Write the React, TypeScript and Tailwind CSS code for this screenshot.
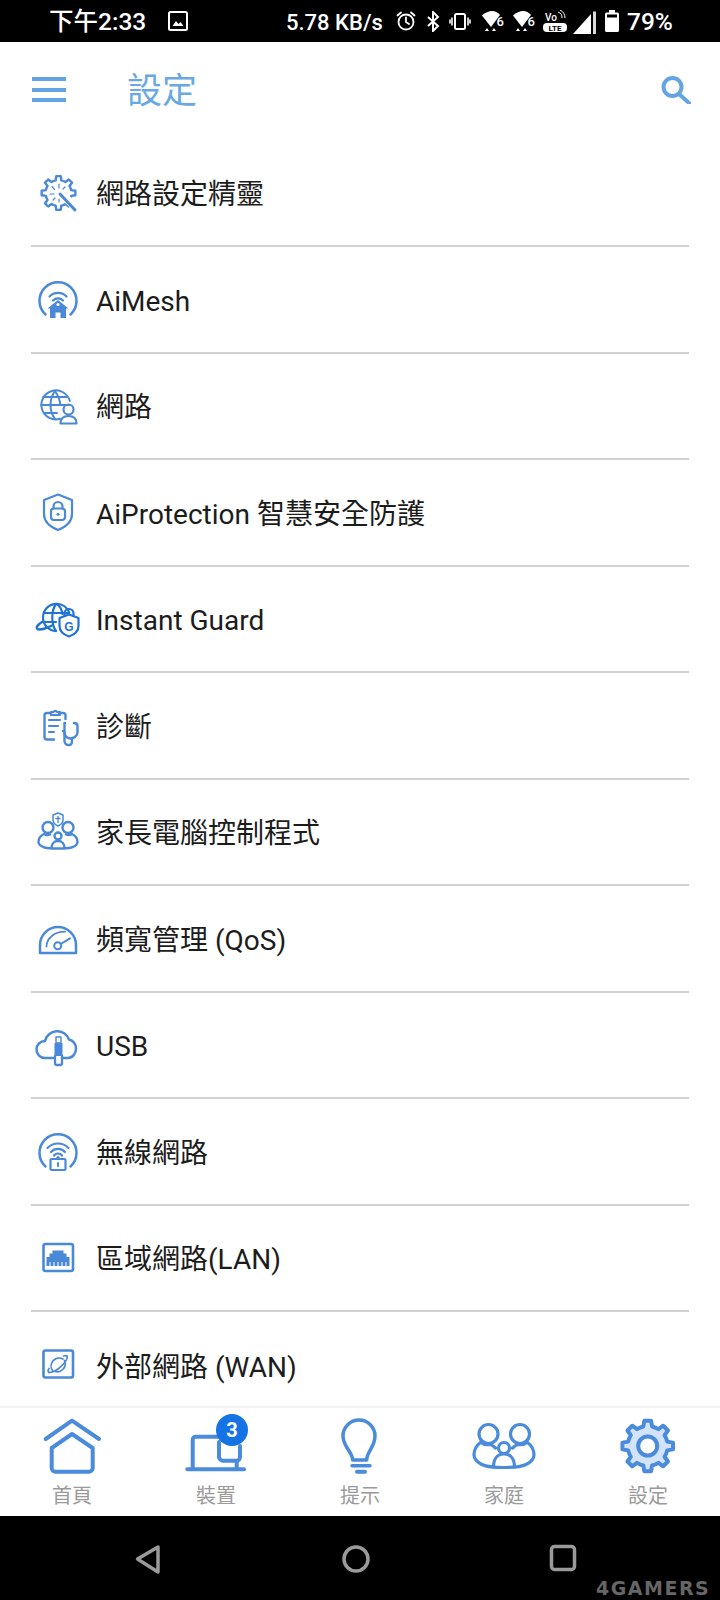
import React from "react";

const BLUE = "#4a88d8";

function gearPath(cx: number, cy: number, outer: number, inner: number, teeth: number) {
  const pts: string[] = [];
  const step = (Math.PI * 2) / teeth;
  for (let i = 0; i < teeth; i++) {
    const a = i * step - Math.PI / 2;
    const list: [number, number][] = [
      [a - step * 0.28, inner],
      [a - step * 0.17, outer],
      [a + step * 0.17, outer],
      [a + step * 0.28, inner],
    ];
    list.forEach(([t, r], j) => {
      const x = (cx + Math.cos(t) * r).toFixed(2);
      const y = (cy + Math.sin(t) * r).toFixed(2);
      if (i === 0 && j === 0) pts.push(`M${x} ${y}`);
      else if (j === 0) pts.push(`A${inner} ${inner} 0 0 1 ${x} ${y}`);
      else pts.push(`L${x} ${y}`);
    });
  }
  const t0 = -step * 0.28 - Math.PI / 2;
  pts.push(`A${inner} ${inner} 0 0 1 ${(cx + Math.cos(t0) * inner).toFixed(2)} ${(cy + Math.sin(t0) * inner).toFixed(2)}Z`);
  return pts.join(" ");
}

const RowSvg = ({ children }: { children: React.ReactNode }) => (
  <svg width="48" height="48" viewBox="0 0 48 48" fill="none" stroke={BLUE} strokeWidth="2" strokeLinecap="round" strokeLinejoin="round" className="shrink-0">
    {children}
  </svg>
);

const IconWizard = () => (
  <RowSvg>
    <path d={gearPath(24.5, 24, 17, 13, 8)} strokeWidth="2.4" />
    <rect x="30" y="30" width="14" height="8" fill="#fff" stroke="none" transform="rotate(45 37 34)" />
    <path d="M26 25 L41 41" strokeWidth="3" />
    <path d="M25 15v4M18 17.500l2.500 3M31 18l-2 2M16 25h4M19 31l2-2M25 33v-3" strokeWidth="1.200" />
  </RowSvg>
);
const IconAiMesh = () => (
  <RowSvg>
    <path d="M11.500 39.500a18.500 18.500 0 1 1 25 0" strokeWidth="2.500" />
    <path d="M15.500 21.500a12 12 0 0 1 17 0M19 25.500a7 7 0 0 1 10 0" strokeWidth="2.200" />
    <path d="M24 25l10.500 8.500H32V43h-5.500v-5.500h-5V43H16v-9.500h-2.500z" fill={BLUE} stroke="none" />
    <circle cx="24" cy="29.500" r="1.600" fill="#fff" stroke="none" />
  </RowSvg>
);
const IconNetwork = () => (
  <RowSvg>
    <path d="M26 36.800A14.500 14.500 0 1 1 35.800 19M7 23h28M9 15h24M10 31h13" strokeWidth="2" />
    <path d="M21 9c-6 8-6 20 0 28M21 9c3.500 5 5 10 5.500 14" strokeWidth="2" />
    <circle cx="34.500" cy="27.500" r="5" strokeWidth="2.200" />
    <path d="M26.500 41.500c0-5 3-7.500 8-7.500s8 2.500 8 7.500z" fill="#fff" strokeWidth="2.200" />
  </RowSvg>
);
const IconShield = () => (
  <RowSvg>
    <path d="M24 6.500l14 5.500v14c0 7.500-6.500 13-14 16-7.500-3-14-8.500-14-16V12z" strokeWidth="2.200" />
    <rect x="17" y="20.500" width="14" height="11.500" rx="3" strokeWidth="2.200" />
    <path d="M19.500 20.500v-2a4.500 4.500 0 0 1 9 0v2" strokeWidth="2.200" />
    <circle cx="24" cy="26.300" r="1.500" fill={BLUE} stroke="none" />
  </RowSvg>
);
const IconGuard = () => (
  <svg width="48" height="48" viewBox="0 0 48 48" fill="none" stroke="#1f74d4" strokeWidth="2.200" strokeLinecap="round" strokeLinejoin="round" className="shrink-0">
    <path d="M22 36c-7 0-13-6-13-13.500S15 8.800 22.500 8.800c6 0 11 3.700 12.800 9M10 18h24M9 27h13" />
    <path d="M22 9c-5 7-5 20 0 27M23 9c3.500 3 5 6.500 5.500 10" />
    <path d="M8 27c-4 2.500-6 5-5 6.500 1.500 2 8 .5 15-3" strokeWidth="2.500" />
    <path d="M35 19.500l9.500 3.500v8c0 5-4 8.500-9.500 10.500-5.500-2-9.500-5.500-9.500-10.500v-8z" fill="#fff" />
    <path d="M30.500 21v-2.500a4.500 4.500 0 0 1 9 0V21" />
    <text x="35" y="36" textAnchor="middle" fontSize="12" fontWeight="700" fill="#1f74d4" stroke="none" style={{ fontFamily: "'Liberation Sans', sans-serif" }}>G</text>
  </svg>
);
const IconDiag = () => (
  <RowSvg>
    <path d="M17 12h-4a2.500 2.500 0 0 0-2.500 2.500V36a2.500 2.500 0 0 0 2.500 2.500h7M25 12h4a2.500 2.500 0 0 1 2.500 2.500V18" strokeWidth="2.400" />
    <path d="M17 14v-3h2.500a2 2 0 0 1 3.500 0H26v3z" strokeWidth="2.200" />
    <path d="M15 19h11M15 25h9M15 31h5" strokeWidth="2.200" />
    <path d="M29 30c1 0 1.500.5 1.500 2v8a4 4 0 0 0 4 4h1c2.500 0 2.500-2 2.500-6.500" strokeWidth="2.400" />
    <path d="M31 22h-.5v10c0 3 3 5.500 6 5.500s7-2.500 7-6V25c0-2-1.500-3-3.500-3" strokeWidth="2.400" />
  </RowSvg>
);
const IconParental = () => (
  <RowSvg>
    <path d="M24 5l5 2v5c0 2.800-2.200 4.700-5 6-2.800-1.300-5-3.200-5-6V7z" strokeWidth="1.500" />
    <path d="M24 8.500v6M22 10.500h4" strokeWidth="1.300" />
    <circle cx="14" cy="19.500" r="5.500" strokeWidth="2.400" />
    <circle cx="34" cy="19.500" r="5.500" strokeWidth="2.400" />
    <circle cx="24" cy="28" r="3.500" strokeWidth="2.400" />
    <path d="M10 26c-3 1.500-5.500 4-5.500 8 0 3 3 4.500 6 5.500 4 1 9 1 13.500 1s9.500 0 13.500-1c3-1 6-2.500 6-5.500 0-4-2.500-6.500-5.500-8-1.500 1-4 1.500-6 .5M10 26c1.500 1 4 1.500 6 .5" strokeWidth="2.400" />
    <path d="M17.500 40c0-4 2.500-7 6.500-7s6.500 3 6.500 7" strokeWidth="2.400" />
  </RowSvg>
);
const IconQos = () => (
  <RowSvg>
    <path d="M6 39v-8a18 18 0 0 1 36 0v8z" strokeWidth="2.500" />
    <path d="M12.500 32.500c0-8 8-15 18.500-14.800" strokeWidth="1.800" />
    <circle cx="23.700" cy="31.700" r="3.500" strokeWidth="2" />
    <path d="M26.700 30L36 24.300" strokeWidth="2" />
  </RowSvg>
);
const IconUsb = () => (
  <RowSvg>
    <path d="M19 37h-8a8.500 8.500 0 0 1 0-17 12.500 12.500 0 0 1 24-1.500 9 9 0 0 1 7 9c0 5-3.500 9.500-8 9.500h-6" strokeWidth="2.500" fill="#fff" />
    <path d="M20.500 22h8v11.500l-1.500 2H22l-1.500-2z" fill={BLUE} stroke="none" />
    <rect x="22" y="16" width="5" height="6" strokeWidth="1.400" fill="#fff" />
    <path d="M21 35v7a2 2 0 0 0 2 2h3a2 2 0 0 0 2-2v-7" fill="#fff" strokeWidth="2.300" />
  </RowSvg>
);
const IconWifi = () => (
  <RowSvg>
    <path d="M11.500 39.500a18.500 18.500 0 1 1 25 0" strokeWidth="2.500" />
    <path d="M13.500 21a14.500 14.500 0 0 1 21 0M17 25a9.500 9.500 0 0 1 14 0M20 28.500a5 5 0 0 1 8 0" strokeWidth="2.200" />
    <rect x="16.500" y="32" width="15" height="11" rx="1" strokeWidth="2.200" fill="#fff" />
    <path d="M24 36v3" strokeWidth="2" />
    <path d="M24 28.500l3 3.500h-6z" fill={BLUE} stroke="none" />
  </RowSvg>
);
const IconLan = () => (
  <RowSvg>
    <rect x="9.500" y="10" width="29.500" height="27" rx="2" strokeWidth="2.600" />
    <path d="M19 16.500h11v3h3V23h3v9H13v-9h3v-3.500h3z" fill={BLUE} stroke="none" transform="translate(-.5 0)" />
    <path d="M16 28v4M20 28v4M24 28v4M28 28v4M32 28v4" stroke="#fff" strokeWidth="1" strokeLinecap="butt" />
  </RowSvg>
);
const IconWan = () => (
  <RowSvg>
    <rect x="9.500" y="9.500" width="29.500" height="27" rx="2" strokeWidth="2.600" />
    <path d="M18.500 29.500a8 8 0 0 1 10.500-11.500M30.500 19.500a8 8 0 0 1-9.500 11" strokeWidth="1.700" />
    <path d="M15 31.500c3.500 0 9.500-3 14-8 3.500-4 5-7 4-8.500-.8-.6-2-.5-3.500 0" strokeWidth="1.700" />
    <path d="M15 31.500c-1.200-.5-1.200-2 0-4" strokeWidth="1.700" />
  </RowSvg>
);

const rows: { label: string; icon: React.ReactNode }[] = [
  { label: "網路設定精靈", icon: <IconWizard /> },
  { label: "AiMesh", icon: <IconAiMesh /> },
  { label: "網路", icon: <IconNetwork /> },
  { label: "AiProtection 智慧安全防護", icon: <IconShield /> },
  { label: "Instant Guard", icon: <IconGuard /> },
  { label: "診斷", icon: <IconDiag /> },
  { label: "家長電腦控制程式", icon: <IconParental /> },
  { label: "頻寬管理 (QoS)", icon: <IconQos /> },
  { label: "USB", icon: <IconUsb /> },
  { label: "無線網路", icon: <IconWifi /> },
  { label: "區域網路(LAN)", icon: <IconLan /> },
  { label: "外部網路 (WAN)", icon: <IconWan /> },
];

const NavSvg = ({ children }: { children: React.ReactNode }) => (
  <svg width="64" height="56" viewBox="0 0 64 56" fill="none" stroke="#4a8bdc" strokeWidth="4" strokeLinecap="round" strokeLinejoin="round">
    {children}
  </svg>
);

const StatusWifi = () => (
  <svg width="23" height="22" viewBox="0 0 23 22" className="shrink-0">
    <path d="M0 5.500C3 2.500 7 1 10 1c3.500 0 5.500 1.500 8 4l-9 12z" fill="#fff" />
    <path d="M3 21h4l-2-3zM10 21h4l-2-3z" fill="#fff" />
    <text x="14.500" y="16" fontSize="13" fill="#fff" style={{ fontFamily: "Roboto, sans-serif" }}>6</text>
  </svg>
);

export default function App() {
  return (
    <div lang="zh-TW" className="w-[720px] h-[1600px] flex flex-col overflow-hidden bg-white" style={{ fontFamily: "Roboto, 'Noto Sans CJK TC', sans-serif" }}>
      {/* status bar */}
      <div className="h-[42px] bg-black text-white flex items-center pl-[49px] shrink-0 text-[24.500px] font-medium">
        <span className="w-[98px] mt-[3px] whitespace-nowrap">下午2:33</span>
        <svg width="20" height="20" viewBox="0 0 20 20" fill="none" className="ml-[21px] shrink-0">
          <rect x="1" y="1" width="18" height="18" rx="1.500" stroke="#fff" strokeWidth="2" />
          <path d="M4.500 15l3.500-5 2.500 3 2-2 3 4z" fill="#fff" />
        </svg>
        <span className="ml-[98px] w-[98px] mt-[3px] whitespace-nowrap text-[22px]">5.78 KB/s</span>
        <svg width="20" height="20" viewBox="0 0 20 20" fill="none" stroke="#fff" strokeWidth="1.800" strokeLinecap="round" className="ml-[12px] shrink-0">
          <circle cx="10" cy="11" r="7.500" />
          <path d="M10 6.500V11l3 2M1.500 4.500L5 1.500M18.500 4.500L15 1.500" />
        </svg>
        <svg width="13" height="21" viewBox="0 0 13 21" fill="none" stroke="#fff" strokeWidth="2" className="ml-[11px] shrink-0">
          <path d="M1 6l10 9-5 5V1l5 5L1 15" />
        </svg>
        <svg width="22" height="17" viewBox="0 0 22 17" fill="none" stroke="#fff" strokeWidth="2" className="ml-[9px] shrink-0">
          <rect x="6" y="1" width="10" height="15" rx="1.500" />
          <path d="M3 4.500v8M1 6.500v4M19 4.500v8M21 6.500v4" strokeWidth="1.600" />
        </svg>
        <div className="ml-[11px] shrink-0 flex"><StatusWifi /></div>
        <div className="ml-[8px] shrink-0 flex"><StatusWifi /></div>
        <svg width="24" height="22" viewBox="0 0 24 22" className="ml-[7px] shrink-0">
          <text x="2" y="11" fontSize="10" fill="#fff" style={{ fontFamily: "Roboto, sans-serif" }}>Vo</text>
          <path d="M15 2a6 6 0 0 1 4 6M17 0a9 9 0 0 1 5 8" stroke="#fff" strokeWidth="1" fill="none" />
          <rect x="0" y="13" width="24" height="9" rx="4" fill="#fff" />
          <text x="12" y="20.500" textAnchor="middle" fontSize="8" fontWeight="700" fill="#000" style={{ fontFamily: "Roboto, sans-serif" }}>LTE</text>
        </svg>
        <svg width="25" height="25" viewBox="0 0 25 25" className="ml-[6px] shrink-0">
          <path d="M0 25L18 5v20z" fill="#fff" />
          <path d="M20 2.500h3V25h-3z" fill="#fff" opacity=".85" />
        </svg>
        <svg width="14" height="22" viewBox="0 0 14 22" className="ml-[7px] shrink-0">
          <path d="M4 0h6v2.500h2.500A1.500 1.500 0 0 1 14 4v16.500a1.500 1.500 0 0 1-1.500 1.500h-11A1.500 1.500 0 0 1 0 20.500V4a1.500 1.500 0 0 1 1.500-1.500H4z" fill="#fff" />
          <rect x="2" y="4.500" width="10" height="3" fill="#000" />
        </svg>
        <span className="ml-[8px] mt-[3px] text-[24.500px] whitespace-nowrap">79%</span>
      </div>

      {/* header */}
      <div className="h-[98.500px] shrink-0 flex items-center pl-[32px] pr-[29px] pb-[2px]">
        <div className="w-[34px] h-[25px] flex flex-col justify-between shrink-0 -mt-[1px]">
          <div className="h-[4px] bg-[#64a4e3]" />
          <div className="h-[4px] bg-[#64a4e3]" />
          <div className="h-[4px] bg-[#64a4e3]" />
        </div>
        <div className="ml-[61px] text-[35px] leading-none text-[#6aa8e2] mt-[3px]">設定</div>
        <svg width="30" height="28" viewBox="0 0 30 28" fill="none" stroke="#64a4e3" strokeWidth="4" strokeLinecap="round" className="ml-auto shrink-0">
          <circle cx="11.500" cy="11" r="9" />
          <path d="M18 18l10 9" />
        </svg>
      </div>

      {/* list */}
      <div className="flex-1 min-h-0 overflow-hidden">
        {rows.map((r, i) => (
          <div key={i} className="h-[106.500px] mx-[31px] flex items-center border-b-2 border-[#d2d2d2] last:border-b-0">
            <div className="ml-[3px] shrink-0 flex"> {r.icon} </div>
            <span className="ml-[14px] mt-[5px] text-[28px] leading-none text-[#1c1c1c] whitespace-nowrap">{r.label}</span>
          </div>
        ))}
      </div>

      {/* bottom tabs */}
      <div className="h-[110px] shrink-0 border-t-2 border-[#f2f2f2] grid grid-cols-5 bg-white pt-[10px]">
        <div className="flex flex-col items-center">
          <NavSvg>
            <path d="M5.700 21L32 2.700 59 21" />
            <path d="M11.700 30L32 16l20.700 14v20a3.700 3.700 0 0 1-3.700 3.700H15.400a3.700 3.700 0 0 1-3.700-3.700z" />
          </NavSvg>
          <span className="mt-[9px] text-[20px] leading-[26px] text-[#9a9a9a]">首頁</span>
        </div>
        <div className="relative flex flex-col items-center">
          <NavSvg>
            <path d="M8.700 50V21.700a3 3 0 0 1 3-3H36" />
            <path d="M3.300 51.300H60" />
            <path d="M35 24v15a4 4 0 0 0 4 3.700h13.500a3.500 3.500 0 0 0 3.500-3.700V28" />
            <path d="M52.700 43v7" />
          </NavSvg>
          <span className="mt-[9px] text-[20px] leading-[26px] text-[#9a9a9a]">裝置</span>
          <div className="absolute left-[72px] -top-[4px] w-[32px] h-[32px] rounded-full bg-[#1573e6] text-white text-[20px] font-bold flex items-center justify-center">3</div>
        </div>
        <div className="flex flex-col items-center">
          <NavSvg>
            <path d="M24.700 42C24.700 34 15 29 15 18a16 16 0 0 1 32 0C47 29 38.700 34 38.700 42z" strokeWidth="3.500" />
            <path d="M24 47.700h18" strokeWidth="3.500" />
            <path d="M29 53.700h8" strokeWidth="4" />
          </NavSvg>
          <span className="mt-[9px] text-[20px] leading-[26px] text-[#9a9a9a]">提示</span>
        </div>
        <div className="flex flex-col items-center">
          <NavSvg>
            <g strokeWidth="3.200">
              <circle cx="16.500" cy="16" r="9.500" />
              <circle cx="48" cy="16" r="9.500" />
              <circle cx="32" cy="30" r="5.500" />
              <path d="M9 24c-4 3-7 7-7 13 0 4 3 7 8 9.500 6 3 14 3 22 3s16 0 22-3c5-2.500 8-5.500 8-9.500 0-6-3-10-7-13-2 2-5 3-8 2.500-3 0-5 2-6.500 3.500M9 24c2 2 5 3 8 2.500 3 0 5 2 6.500 3.500" />
              <path d="M21.500 49c0-8 4-13 10.500-13s10.500 5 10.500 13" />
            </g>
          </NavSvg>
          <span className="mt-[9px] text-[20px] leading-[26px] text-[#9a9a9a]">家庭</span>
        </div>
        <div className="flex flex-col items-center">
          <NavSvg>
            <path d={gearPath(31.700, 28, 25.500, 20, 8)} fill="#d2e3fb" strokeWidth="4" />
            <circle cx="31.700" cy="28" r="9.500" fill="#fff" strokeWidth="4" />
          </NavSvg>
          <span className="mt-[9px] text-[20px] leading-[26px] text-[#9a9a9a]">設定</span>
        </div>
      </div>

      {/* android nav */}
      <div className="relative h-[84px] shrink-0 bg-black flex items-start pt-[28px] pl-[135px]">
        <svg width="26" height="30" viewBox="0 0 26 30" fill="none" stroke="#9a9a9a" strokeWidth="3.500" strokeLinejoin="round" className="shrink-0">
          <path d="M2.500 15L23 3v25z" />
        </svg>
        <svg width="30" height="30" viewBox="0 0 30 30" fill="none" stroke="#9a9a9a" strokeWidth="3.500" className="ml-[180px] shrink-0">
          <circle cx="15" cy="15" r="12" />
        </svg>
        <svg width="28" height="28" viewBox="0 0 28 28" fill="none" stroke="#9a9a9a" strokeWidth="3.500" className="ml-[178px] shrink-0">
          <rect x="2.500" y="2.500" width="23" height="23" rx="3" />
        </svg>
        <span className="absolute left-[596px] top-[60px] text-[19px] leading-[24px] font-bold tracking-[1.500px] text-[#666666]" style={{ fontFamily: "'DejaVu Sans', sans-serif" }}>4GAMERS</span>
      </div>
    </div>
  );
}
